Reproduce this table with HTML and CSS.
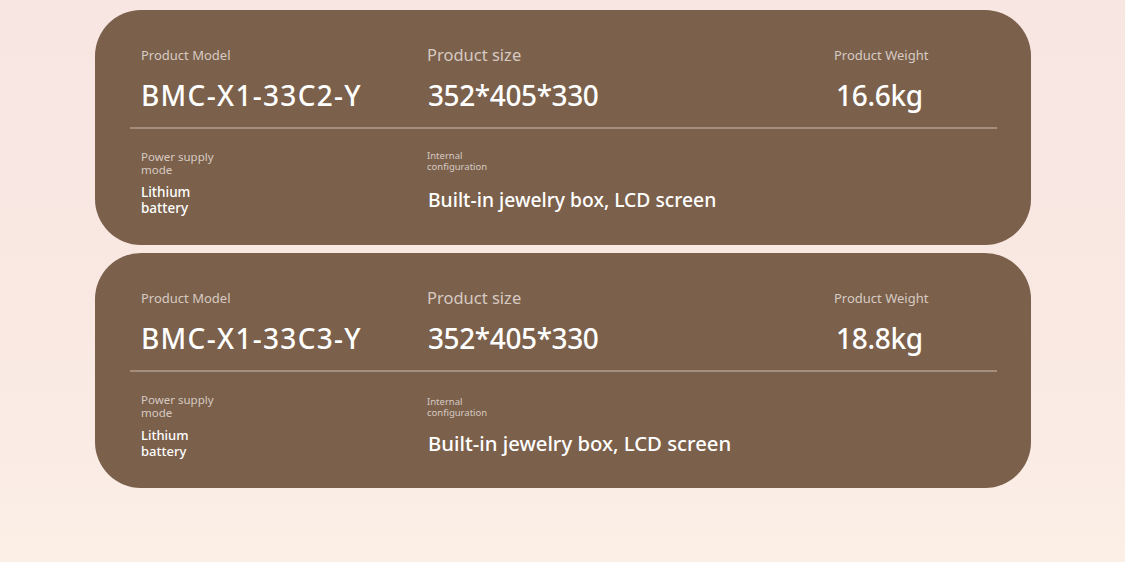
FILE: index.html
```html
<!DOCTYPE html>
<html lang="en">
<head>
<meta charset="utf-8">
<title>Product specs</title>
<link rel="stylesheet" href="styles.css">
</head>
<body>
<main class="list">
  <section class="card">
    <div class="row row-top">
      <div class="cell c1">
        <div class="label">Product Model</div>
        <div class="value value-model">BMC-X1-33C2-Y</div>
      </div>
      <div class="cell c2">
        <div class="label label-lg">Product size</div>
        <div class="value value-size">352*405*330</div>
      </div>
      <div class="cell c3">
        <div class="label">Product Weight</div>
        <div class="value value-weight">16.6kg</div>
      </div>
    </div>
    <div class="divider"></div>
    <div class="row row-bottom">
      <div class="cell c1">
        <div class="label-sm">Power supply<br>mode</div>
        <div class="value-sm">Lithium<br>battery</div>
      </div>
      <div class="cell c2">
        <div class="label-xs">Internal<br>configuration</div>
        <div class="value-md">Built-in jewelry box, LCD screen</div>
      </div>
    </div>
  </section>
  <section class="card card-b">
    <div class="row row-top">
      <div class="cell c1">
        <div class="label">Product Model</div>
        <div class="value value-model">BMC-X1-33C3-Y</div>
      </div>
      <div class="cell c2">
        <div class="label label-lg">Product size</div>
        <div class="value value-size">352*405*330</div>
      </div>
      <div class="cell c3">
        <div class="label">Product Weight</div>
        <div class="value value-weight">18.8kg</div>
      </div>
    </div>
    <div class="divider"></div>
    <div class="row row-bottom">
      <div class="cell c1">
        <div class="label-sm">Power supply<br>mode</div>
        <div class="value-sm">Lithium<br>battery</div>
      </div>
      <div class="cell c2">
        <div class="label-xs">Internal<br>configuration</div>
        <div class="value-md">Built-in jewelry box, LCD screen</div>
      </div>
    </div>
  </section>
</main>
</body>
</html>
```

FILE: styles.css
```css
html, body {
  margin: 0;
  padding: 0;
}
body {
  width: 1125px;
  height: 562px;
  overflow: hidden;
  font-family: "Noto Sans", "Open Sans", sans-serif;
  background: linear-gradient(180deg, #f8e6e3 0%, #f9e7e2 45%, #fbefe6 100%);
}
.list {
  display: flex;
  flex-direction: column;
  gap: 8px;
  padding: 10px 0 0 95px;
}
.card {
  width: 936px;
  height: 235px;
  box-sizing: border-box;
  border-radius: 46px;
  background: #7b604b;
  padding: 37px 34px 0 35px;
  display: flex;
  flex-direction: column;
}
.row {
  display: grid;
  grid-template-columns: 286px 407px 1fr;
  padding-left: 11px;
}
.cell {
  display: flex;
  flex-direction: column;
}
.label {
  font-size: 13px;
  line-height: 16px;
  height: 16px;
  color: #d6cac2;
}
.label-lg {
  font-size: 16.5px;
}
.value {
  margin-top: 15px;
  font-size: 28px;
  line-height: 34px;
  color: #ffffff;
  font-weight: 500;
}
.value-model {
  letter-spacing: 1.3px;
}
.value-size {
  letter-spacing: -0.4px;
  padding-left: 1px;
}
.value-weight {
  padding-left: 2px;
  letter-spacing: -0.3px;
}
.divider {
  margin-top: 15px;
  height: 2px;
  background: #a48e7e;
}
.row-bottom {
  padding-top: 21px;
}
.label-sm {
  font-size: 11.5px;
  line-height: 13px;
  color: #d6cac2;
}
.label-xs {
  font-size: 9.5px;
  line-height: 11px;
  color: #d6cac2;
}
.value-sm {
  margin-top: 8px;
  font-size: 13.5px;
  line-height: 16px;
  font-weight: 500;
  color: #ffffff;
}
.value-md {
  margin-top: 16px;
  font-size: 19.3px;
  line-height: 24px;
  font-weight: 500;
  color: #ffffff;
  padding-left: 1px;
}
.card-b .label-xs {
  margin-top: 3px;
}
.card-b .value-sm {
  font-size: 13px;
}
.card-b .value-md {
  margin-top: 13px;
  font-size: 20.3px;
}
```
